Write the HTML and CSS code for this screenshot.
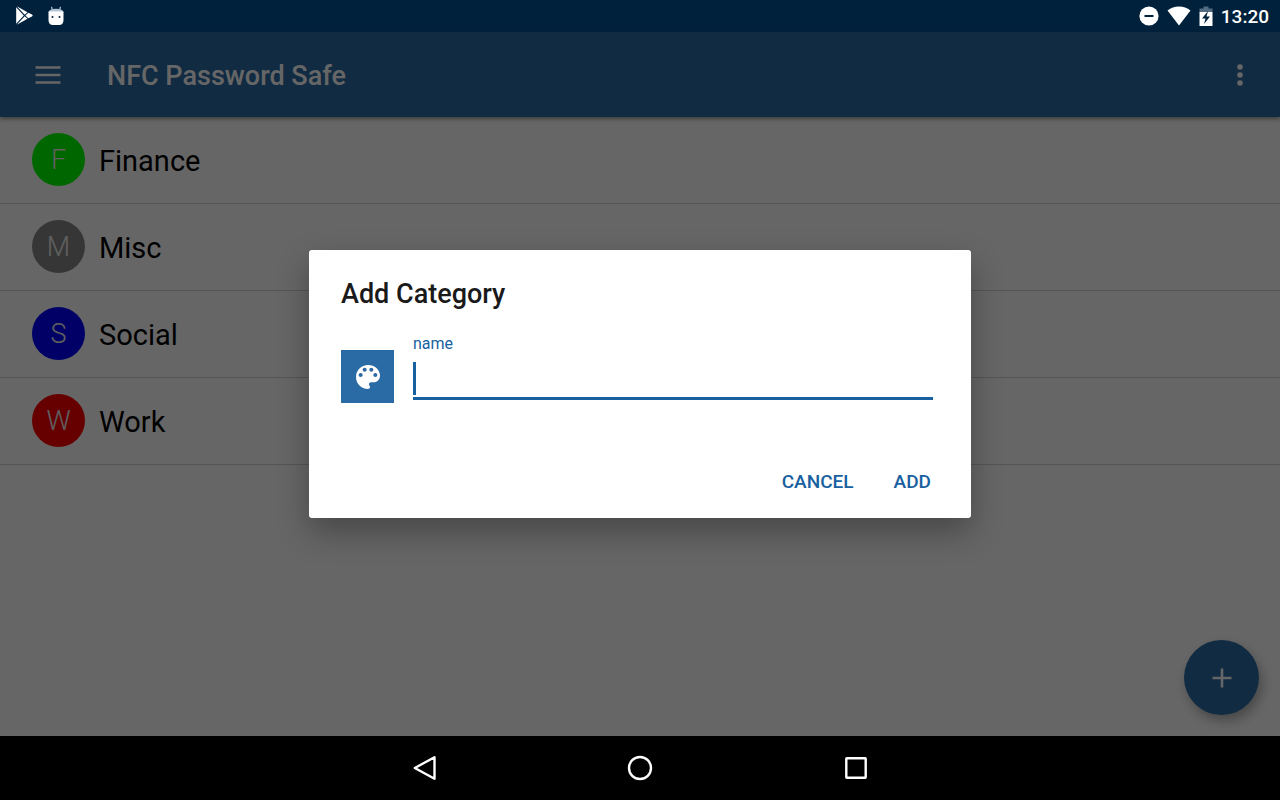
FILE: index.html
```html
<!DOCTYPE html>
<html lang="en">
<head>
    <meta charset="UTF-8">
    <meta name="viewport" content="width=device-width, initial-scale=1.0">
    <title>NFC Password Safe</title>
    <link rel="stylesheet" href="styles.css">
</head>
<body>

    <div class="status-bar">
        <div class="status-group">
            <svg width="18" height="20" viewBox="0 0 18 20">
                <g fill="#fff">
                    <path d="M0.2 1.200v16.600L7.800 9.500z"/>
                    <path d="M0.800 0.200L8.700 8.700L11.500 6.300z"/>
                    <path d="M0.800 18.800L8.700 10.300L11.500 12.700z"/>
                    <path d="M9.400 9.500L12.300 6.700L16 8.600Q17.500 9.500 16 10.400L12.300 12.300z"/>
                </g>
            </svg>
            <svg width="16" height="20" viewBox="0 0 16 20">
                <path d="M3.500 0.800L4.300 4M12.500 0.800L11.700 4" stroke="#b5c4d4" stroke-width="1.200"/>
                <path d="M0.500 6.500Q1 2.800 8 2.800T15.500 6.500z" fill="#b5c4d4"/>
                <path d="M0.500 5.500H15.500V14Q15.500 19 11 19H5Q0.500 19 0.500 14z" fill="#fff"/>
                <circle cx="4.500" cy="11" r="1" fill="#00213c"/>
                <circle cx="11.500" cy="11" r="1" fill="#00213c"/>
            </svg>
        </div>
        <div class="status-group status-right">
            <svg width="20" height="20" viewBox="0 0 20 20">
                <circle cx="10" cy="10" r="9.600" fill="#fff"/>
                <path d="M5.500 10h9" stroke="#00213c" stroke-width="2"/>
            </svg>
            <svg width="24" height="20" viewBox="0 0 24 20">
                <path d="M12 19.500L0.500 4.500Q5.500 0.500 12 0.500T23.500 4.500z" fill="#fff"/>
            </svg>
            <svg width="14" height="20" viewBox="0 0 14 20">
                <path d="M0.500 6V2.500H4.500V0.500H9.500V2.500H13.500V6z" fill="#536c82"/>
                <path d="M0.500 6H13.500V20H0.500z" fill="#fff"/>
                <path d="M9 5L3 12.500H6.500L5 18L11 10.500H7.500z" fill="#00213c"/>
            </svg>
            <span class="clock">13:20</span>
        </div>
    </div>

    <div class="app">
        <header class="app-bar">
            <button class="icon-btn" aria-label="Open menu">
                <svg width="26" height="18" viewBox="0 0 26 18">
                    <path d="M0.500 1.500h25M0.500 9h25M0.500 16.500h25" stroke="#fff" stroke-width="2.600"/>
                </svg>
            </button>
            <h1>NFC Password Safe</h1>
            <button class="icon-btn" aria-label="More options">
                <svg width="6" height="22" viewBox="0 0 6 22">
                    <g fill="#fff">
                        <circle cx="3" cy="3" r="2.800"/>
                        <circle cx="3" cy="11" r="2.800"/>
                        <circle cx="3" cy="19" r="2.800"/>
                    </g>
                </svg>
            </button>
        </header>

        <main>
            <ul class="categories">
                <li><span class="avatar green">F</span><span class="name">Finance</span></li>
                <li><span class="avatar gray">M</span><span class="name">Misc</span></li>
                <li><span class="avatar blue">S</span><span class="name">Social</span></li>
                <li><span class="avatar red">W</span><span class="name">Work</span></li>
            </ul>
        </main>

        <button class="fab" aria-label="Add category">
            <svg width="20" height="20" viewBox="0 0 20 20">
                <path d="M10 0.500v19M0.500 10h19" stroke="#fff" stroke-width="2.600"/>
            </svg>
        </button>

        <div class="scrim">
            <form class="dialog" role="dialog" aria-labelledby="dialog-title">
                <h2 id="dialog-title">Add Category</h2>
                <div class="dialog-body">
                    <button type="button" class="color-btn" aria-label="Pick a color">
                        <svg width="32" height="32" viewBox="0 0 24 24">
                            <path fill="#fff" d="M12 3c-4.970 0-9 4.030-9 9s4.030 9 9 9c.83 0 1.500-.67 1.500-1.500 0-.39-.15-.74-.39-1.010-.23-.26-.38-.61-.38-.99 0-.83.67-1.500 1.500-1.500H16c2.760 0 5-2.240 5-5 0-4.420-4.030-8-9-8zm-5.500 9c-.83 0-1.500-.67-1.500-1.500S5.670 9 6.500 9 8 9.670 8 10.500 7.330 12 6.500 12zm3-4C8.670 8 8 7.330 8 6.500S8.670 5 9.500 5s1.500.67 1.500 1.500S10.330 8 9.500 8zm5 0c-.83 0-1.500-.67-1.500-1.500S13.670 5 14.500 5s1.500.67 1.500 1.500S15.330 8 14.500 8zm3 4c-.83 0-1.500-.67-1.500-1.500S16.670 9 17.500 9s1.500.67 1.500 1.500-.67 1.500-1.500 1.500z"/>
                        </svg>
                    </button>
                    <div class="field">
                        <label for="name">name</label>
                        <input type="text" id="name" name="name" autocomplete="off">
                        <span class="caret"></span>
                    </div>
                </div>
                <div class="dialog-actions">
                    <button type="button">CANCEL</button>
                    <button type="submit">ADD</button>
                </div>
            </form>
        </div>
    </div>

    <nav class="nav-bar">
        <button aria-label="Back">
            <svg width="26" height="26" viewBox="0 0 26 26">
                <path d="M23.500 2.200V23.800L3.800 13z" fill="none" stroke="#fff" stroke-width="2.400" stroke-linejoin="round"/>
            </svg>
        </button>
        <button aria-label="Home">
            <svg width="26" height="26" viewBox="0 0 26 26">
                <circle cx="13" cy="13" r="11" fill="none" stroke="#fff" stroke-width="2.400"/>
            </svg>
        </button>
        <button aria-label="Recent apps">
            <svg width="26" height="26" viewBox="0 0 26 26">
                <rect x="3.300" y="3.300" width="19.400" height="19.400" rx="0.500" fill="none" stroke="#fff" stroke-width="2.400"/>
            </svg>
        </button>
    </nav>

</body>
</html>
```

FILE: styles.css
```css
* {
    margin: 0;
    padding: 0;
    box-sizing: border-box;
}
body {
    display: flex;
    flex-direction: column;
    min-height: 100vh;
    font-family: Roboto, 'Liberation Sans', sans-serif;
    background-color: #000;
    color: #000;
}
button {
    background: none;
    border: none;
    font-family: inherit;
    cursor: pointer;
}
svg {
    display: block;
}

/* system status bar */
.status-bar {
    display: flex;
    justify-content: space-between;
    align-items: center;
    height: 32px;
    padding: 0 11px 0 16px;
    background-color: #00213c;
    color: #fff;
}
.status-group {
    display: flex;
    align-items: center;
    gap: 14px;
}
.status-right {
    gap: 8px;
}
.clock {
    padding-top: 2px;
    font-size: 19px;
    font-weight: 500;
    line-height: 30px;
}

/* app screen */
.app {
    position: relative;
    flex: 1;
    background-color: #fff;
}
.app-bar {
    display: flex;
    align-items: center;
    height: 85px;
    padding: 0 32px;
    background-color: #2b6ba5;
    color: #fff;
    box-shadow: 0 2px 4px rgba(0, 0, 0, 0.4);
}
.app-bar h1 {
    flex: 1;
    margin-left: 43px;
    padding-top: 2px;
    font-size: 27px;
    font-weight: 500;
}
.icon-btn {
    padding: 5px;
}
.app-bar .icon-btn:first-child {
    padding: 5px 3px;
}
.categories {
    list-style: none;
}
.categories li {
    display: flex;
    align-items: center;
    gap: 14px;
    height: 87px;
    padding: 0 32px 1px;
    border-bottom: 1px solid #d4d4d4;
}
.name {
    padding-top: 3px;
    font-size: 29px;
}
.avatar {
    width: 53px;
    height: 53px;
    border-radius: 50%;
    color: #eee;
    font-size: 27px;
    font-weight: 300;
    line-height: 54px;
    text-align: center;
}
.green {
    background-color: #00ff00;
}
.gray {
    background-color: #888;
}
.blue {
    background-color: #0000ff;
}
.red {
    background-color: #ff0000;
}
.fab {
    position: absolute;
    right: 21px;
    bottom: 21px;
    display: grid;
    place-items: center;
    width: 75px;
    height: 75px;
    border-radius: 50%;
    background-color: #2b6ba5;
    box-shadow: 3px 6px 12px rgba(0, 0, 0, 0.3);
}

/* add category dialog */
.scrim {
    position: absolute;
    inset: 0;
    display: flex;
    justify-content: center;
    align-items: center;
    background-color: rgba(0, 0, 0, 0.6);
}
.dialog {
    width: 100%;
    max-width: 662px;
    padding: 24px 32px 12px;
    border-radius: 3px;
    background-color: #fff;
    box-shadow: 0 14px 32px rgba(0, 0, 0, 0.3);
}
.dialog h2 {
    color: #1a1a1a;
    font-size: 27px;
    font-weight: 500;
    line-height: 40px;
}
.dialog-body {
    display: flex;
    align-items: flex-end;
    gap: 19px;
    padding: 20px 6px 0 0;
}
.color-btn {
    display: grid;
    place-items: center;
    width: 53px;
    height: 53px;
    background-color: #2b6ba5;
}
.field {
    position: relative;
    flex: 1;
    padding-bottom: 3px;
}
.field label {
    display: block;
    color: #1860a0;
    font-size: 16px;
    line-height: 20px;
}
.field input {
    display: block;
    width: 100%;
    height: 46px;
    border: none;
    border-bottom: 3px solid #1860a0;
    outline: none;
    font-family: inherit;
    font-size: 24px;
    caret-color: transparent;
}
.caret {
    position: absolute;
    left: 0;
    bottom: 8px;
    width: 3px;
    height: 33px;
    background-color: #1860a0;
}
.dialog-actions {
    display: flex;
    justify-content: flex-end;
    gap: 24px;
    padding-top: 55px;
}
.dialog-actions button {
    padding: 0 8px;
    color: #1860a0;
    font-size: 19px;
    font-weight: 500;
    line-height: 48px;
}

/* system navigation */
.nav-bar {
    display: flex;
    justify-content: center;
    align-items: center;
    gap: 190px;
    height: 64px;
    background-color: #000;
}
```
